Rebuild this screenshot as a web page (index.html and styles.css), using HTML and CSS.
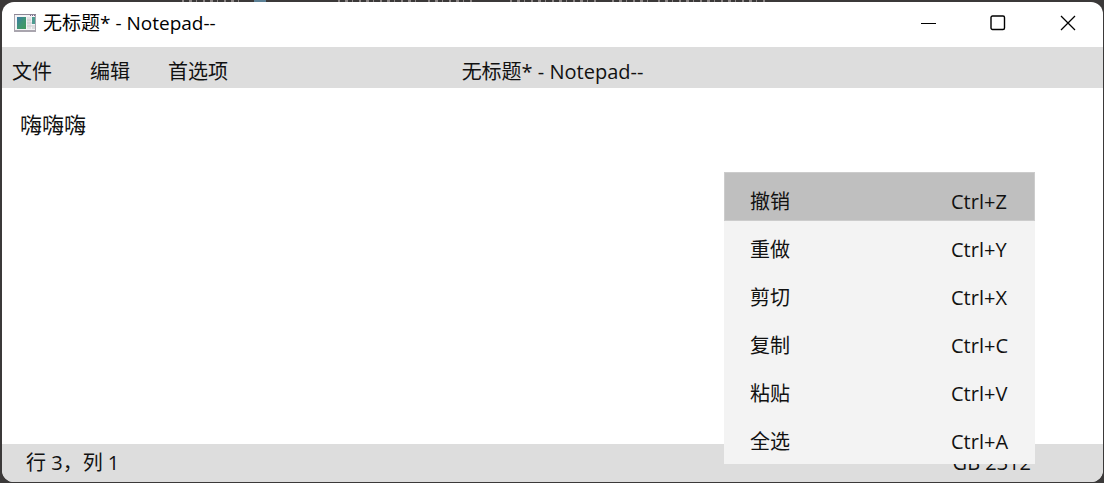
FILE: index.html
```
<!DOCTYPE html>
<html lang="zh-CN">
<head>
<meta charset="utf-8">
<title>无标题* - Notepad--</title>
<link rel="stylesheet" href="styles.css">
</head>
<body>
<svg class="backdrop" width="600" height="2" aria-hidden="true">
  <path d="M2 1h60M158 1h80M248 1h48M330 1h90M432 1h40M478 1h108" stroke="#8b8585" stroke-width="2" stroke-dasharray="2 5 3 4 1 6"/>
  <path d="M74 1h12" stroke="#5b8095" stroke-width="2"/>
</svg>
<main class="window">
  <header class="titlebar">
    <svg class="app-icon" width="23" height="18" viewBox="0 0 23 18" aria-hidden="true">
      <defs>
        <linearGradient id="pane" x1="0" y1="0" x2="1" y2="1">
          <stop offset="0" stop-color="#3b78a8"/><stop offset=".5" stop-color="#3f9478"/><stop offset="1" stop-color="#439a5a"/>
        </linearGradient>
      </defs>
      <path d="M0 0h22v18H0z" fill="#a9a5ae"/>
      <path d="M1 1h20v15H1z" fill="#f4f4f6"/>
      <path d="M0 0h22v1H0z" fill="#8e8796"/>
      <path d="M16 1h1v1h-1zM18 1h1v1h-1zM20 1h1v1h-1z" fill="#77638a"/>
      <path d="M3 3h9v12H3z" fill="url(#pane)"/>
      <path d="M13 3h4v12h-4z" fill="#e2e2e4"/>
      <path d="M13 6h4M13 9h7M13 12h7" stroke="#c9c9cc"/>
      <path d="M18 3h3v7h-3z" fill="#4e9c91"/>
      <path d="M18 11h3v4h-3z" fill="#d9dbdc"/>
    </svg>
    <h1 class="window-title">无标题* - Notepad--</h1>
    <div class="controls">
      <button class="control" type="button" aria-label="最小化"><svg width="16" height="16"><path d="M1 8.500h15" stroke="#000"/></svg></button>
      <button class="control" type="button" aria-label="最大化"><svg width="16" height="16"><rect x="1" y="1" width="13.500" height="13.500" rx="1.500" fill="none" stroke="#000" stroke-width="1.400"/></svg></button>
      <button class="control" type="button" aria-label="关闭"><svg width="16" height="16"><path d="M1 1l14 14M15 1L1 15" stroke="#000" stroke-width="1.300"/></svg></button>
    </div>
  </header>
  <nav class="menubar">
    <div class="menus">
      <button class="menu" type="button">文件</button>
      <button class="menu" type="button">编辑</button>
      <button class="menu" type="button">首选项</button>
    </div>
    <span class="document-name">无标题* - Notepad--</span>
  </nav>
  <textarea class="editor" aria-label="文本" spellcheck="false">嗨嗨嗨</textarea>
  <footer class="statusbar">
    <span>行 3，列 1</span>
    <span>GB 2312</span>
  </footer>
  <div class="context-menu" role="menu">
    <button class="item active" type="button" role="menuitem"><span>撤销</span><span class="keys">Ctrl+Z</span></button>
    <button class="item" type="button" role="menuitem"><span>重做</span><span class="keys">Ctrl+Y</span></button>
    <button class="item" type="button" role="menuitem"><span>剪切</span><span class="keys">Ctrl+X</span></button>
    <button class="item" type="button" role="menuitem"><span>复制</span><span class="keys">Ctrl+C</span></button>
    <button class="item" type="button" role="menuitem"><span>粘贴</span><span class="keys">Ctrl+V</span></button>
    <button class="item" type="button" role="menuitem"><span>全选</span><span class="keys">Ctrl+A</span></button>
  </div>
</main>
</body>
</html>
```
FILE: styles.css
```
* {
  box-sizing: border-box;
}

body {
  margin: 0;
  height: 100vh;
  padding: 2px 1px 1px 2px;
  background: #3b3939;
  color: #111;
  font: 20px/28px "Open Sans", "Noto Sans CJK SC", sans-serif;
}

button,
textarea {
  border: 0;
  background: none;
  color: inherit;
  font: inherit;
}

.backdrop {
  position: absolute;
  top: 0;
  left: 180px;
}

.window {
  position: relative;
  display: flex;
  flex-direction: column;
  height: 100%;
  border-radius: 12px;
  background: #fff;
}

.titlebar {
  display: flex;
  align-items: center;
  height: 45px;
  padding: 0 0 3px 12px;
}

.window-title {
  flex: 1;
  margin: 0 0 0 6px;
  color: #000;
  font-size: 19px;
  font-weight: 400;
}

.controls {
  display: flex;
  align-self: stretch;
}

.control {
  display: flex;
  align-items: center;
  justify-content: center;
  width: 70px;
  padding: 0;
}

.menubar {
  display: grid;
  grid-template-columns: 1fr auto 1fr;
  align-items: center;
  height: 41px;
  padding-top: 8px;
  background: #ddd;
}

.menus {
  display: flex;
  gap: 38px;
  padding-left: 10px;
}

.menu {
  padding: 0;
}

.editor {
  flex: 1;
  width: 100%;
  padding: 20px 18px;
  outline: 0;
  resize: none;
  font-size: 22px;
  line-height: 32px;
}

.statusbar {
  display: flex;
  align-items: center;
  justify-content: space-between;
  height: 38px;
  padding: 0 72px 0 24px;
  border-radius: 0 0 12px 12px;
  background: #ddd;
}

.context-menu {
  position: absolute;
  top: 170px;
  right: 68px;
  display: flex;
  flex-direction: column;
  width: 311px;
  padding-bottom: 3px;
  background: #f3f3f3;
}

.item {
  display: flex;
  align-items: center;
  justify-content: space-between;
  height: 48px;
  padding: 10px 25px 0 26px;
  text-align: left;
}

.item.active {
  height: 49px;
  border: 1px solid #ccc;
  padding: 10px 24px 0 25px;
  background: #bfbfbf;
}

.keys {
  width: 59px;
}
```
